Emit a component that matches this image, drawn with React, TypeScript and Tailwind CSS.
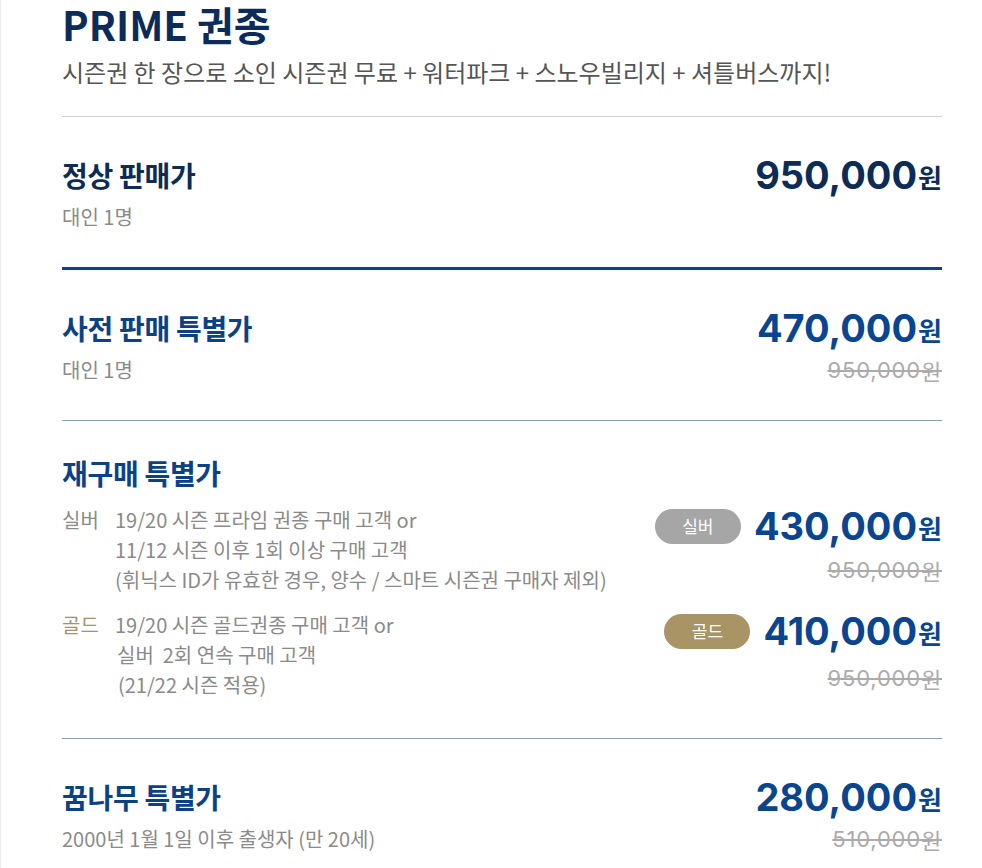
import React from "react";

const KR = "font-['Noto_Sans_CJK_KR',sans-serif]";
const NUM = "font-['Inter','Noto_Sans_CJK_KR',sans-serif]";

function Price({ value, dark = false }: { value: string; dark?: boolean }) {
  return (
    <div
      className={`${NUM} h-[36px] flex items-center justify-end font-bold text-[38px] leading-none ${
        dark ? "text-[#0c2b55]" : "text-[#09468f]"
      }`}
    >
      {value}
      <span className={`${KR} text-[26px] font-bold ml-[1px] mt-[4px]`}>원</span>
    </div>
  );
}

function Strike({ value }: { value: string }) {
  return (
    <div className={`${NUM} h-[26px] flex items-center justify-end text-[22px] text-[#ababab] line-through tracking-[0.8px]`}>
      {value}
      <span className={`${KR}`}>원</span>
    </div>
  );
}

function Badge({ label, gold = false }: { label: string; gold?: boolean }) {
  return (
    <span
      className={`${KR} w-[86px] h-[35px] rounded-full flex items-center justify-center text-white text-[17px] ${
        gold ? "bg-[#a89464]" : "bg-[#a6a6a6]"
      }`}
    >
      {label}
    </span>
  );
}

function SimpleSection({
  title,
  note,
  price,
  original,
  dark = false,
}: {
  title: string;
  note: string;
  price: string;
  original?: string;
  dark?: boolean;
}) {
  return (
    <div className="flex justify-between pt-[40px] pb-[37px]">
      <div className="flex flex-col gap-[11px]">
        <h3
          className={`${KR} h-[36px] flex items-center text-[28px] font-bold tracking-[-0.3px] ${
            dark ? "text-[#0c2b55]" : "text-[#0b4286]"
          }`}
        >
          {title}
        </h3>
        <p className={`${KR} h-[26px] flex items-center text-[20px] text-[#8a8a8a]`}>{note}</p>
      </div>
      <div className="flex flex-col gap-[11px]">
        <Price value={price} dark={dark} />
        {original ? <Strike value={original} /> : <div className="h-[26px]" />}
      </div>
    </div>
  );
}

export default function App() {
  return (
    <div className="min-h-screen bg-white border-l border-[#ececec] pl-[61px] pr-[40px]">
      {/* Header */}
      <div className="pb-[28px] border-b border-[#d2d2d2]">
        <h1 className={`${KR} h-[48px] flex items-center text-[40px] font-bold text-[#0b2c5a]`}>
          PRIME 권종
        </h1>
        <p className={`${KR} mt-[8px] h-[32px] flex items-center text-[24px] text-[#555555]`}>
          시즌권 한 장으로 소인 시즌권 무료 + 워터파크 + 스노우빌리지 + 셔틀버스까지!
        </p>
      </div>

      <SimpleSection title="정상 판매가" note="대인 1명" price="950,000" dark />
      <div className="h-[3px] bg-[#0d4482]" />

      <div className="border-b border-[#8e9eb3]">
        <SimpleSection title="사전 판매 특별가" note="대인 1명" price="470,000" original="950,000" />
      </div>

      {/* 재구매 */}
      <div className="pt-[34px] pb-[38px] border-b border-[#8e9eb3]">
        <h3 className={`${KR} h-[36px] flex items-center text-[28px] font-bold tracking-[-0.3px] text-[#0b4286]`}>
          재구매 특별가
        </h3>
        <div className="mt-[14px] flex flex-col gap-[15px]">
          <div className="flex justify-between">
            <div className={`${KR} flex text-[20px] leading-[30px] text-[#8a8a8a]`}>
              <span className="w-[53px]">실버</span>
              <div>
                <p>19/20 시즌 프라임 권종 구매 고객 or</p>
                <p>11/12 시즌 이후 1회 이상 구매 고객</p>
                <p>(휘닉스 ID가 유효한 경우, 양수 / 스마트 시즌권 구매자 제외)</p>
              </div>
            </div>
            <div className="flex flex-col gap-[13px] pt-[3px]">
              <div className="flex items-center gap-[13px]">
                <Badge label="실버" />
                <Price value="430,000" />
              </div>
              <Strike value="950,000" />
            </div>
          </div>
          <div className="flex justify-between">
            <div className={`${KR} flex text-[20px] leading-[30px] text-[#8a8a8a]`}>
              <span className="w-[53px] text-[#a69368]">골드</span>
              <div>
                <p>19/20 시즌 골드권종 구매 고객 or</p>
                <p className="pl-[2px]">실버&nbsp; 2회 연속 구매 고객</p>
                <p className="pl-[3px]">(21/22 시즌 적용)</p>
              </div>
            </div>
            <div className="flex flex-col gap-[16px] pt-[3px]">
              <div className="flex items-center gap-[13px]">
                <Badge label="골드" gold />
                <Price value="410,000" />
              </div>
              <Strike value="950,000" />
            </div>
          </div>
        </div>
      </div>

      <SimpleSection
        title="꿈나무 특별가"
        note="2000년 1월 1일 이후 출생자 (만 20세)"
        price="280,000"
        original="510,000"
      />
    </div>
  );
}
